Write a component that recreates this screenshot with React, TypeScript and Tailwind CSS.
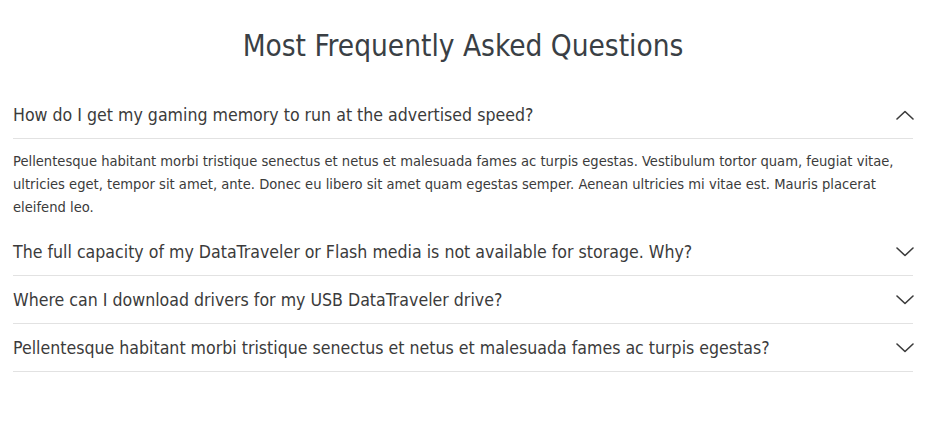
const faqs = [
  {
    q: 'How do I get my gaming memory to run at the advertised speed?',
    a: 'Pellentesque habitant morbi tristique senectus et netus et malesuada fames ac turpis egestas. Vestibulum tortor quam, feugiat vitae, ultricies eget, tempor sit amet, ante. Donec eu libero sit amet quam egestas semper. Aenean ultricies mi vitae est. Mauris placerat eleifend leo.',
    open: true,
  },
  {
    q: 'The full capacity of my DataTraveler or Flash media is not available for storage. Why?',
    a: '',
    open: false,
  },
  {
    q: 'Where can I download drivers for my USB DataTraveler drive?',
    a: '',
    open: false,
  },
  {
    q: 'Pellentesque habitant morbi tristique senectus et netus et malesuada fames ac turpis egestas?',
    a: '',
    open: false,
  },
];

const Chevron = ({ up }: { up: boolean }) => (
  <svg width="18" height="10" viewBox="0 0 18 10" fill="none" className="shrink-0 mr-[-1px]">
    <path
      d={up ? 'M1 9L9 1.5L17 9' : 'M1 1L9 8.5L17 1'}
      stroke="#3b3b3b"
      strokeWidth="1.6"
      strokeLinecap="round"
      strokeLinejoin="round"
    />
  </svg>
);

export default function App() {
  return (
    <div className="w-[932px] h-[432px] bg-white font-['DejaVu_Sans',sans-serif] [font-stretch:condensed] text-[#3b3b3b]">
      <div className="w-[900px] ml-[13px] pt-[26px]">
        <h2 className="text-center text-[29.5px] leading-[40px] text-[#3a3f45] mb-[25px]">
          Most Frequently Asked Questions
        </h2>

        <div>
          {faqs.map((item) => (
            <div key={item.q}>
              <div className="flex items-center justify-between h-[48px] pt-[1px] border-b border-[#e2e2e2] text-[17.6px]">
                <span>{item.q}</span>
                <Chevron up={item.open} />
              </div>
              {item.open && (
                <p className="pt-[10px] pb-[10px] text-[14.6px] leading-[23px]">{item.a}</p>
              )}
            </div>
          ))}
        </div>
      </div>
    </div>
  );
}
